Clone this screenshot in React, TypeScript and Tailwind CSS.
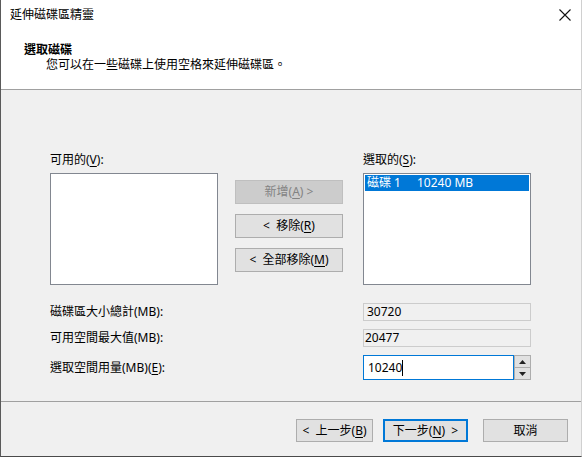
import React from "react";

const font = "font-['Noto_Sans','Noto_Sans_CJK_TC',sans-serif]";

function Btn({ children, disabled, primary, className = "" }: { children: React.ReactNode; disabled?: boolean; primary?: boolean; className?: string }) {
  const base = "flex items-center justify-center text-[12px] leading-none whitespace-pre";
  const look = disabled
    ? "bg-[#cccccc] border border-[#bfbfbf] text-[#838383]"
    : primary
    ? "bg-[#e1e1e1] border-2 border-[#0078d7] text-black"
    : "bg-[#e1e1e1] border border-[#adadad] text-black";
  return <div className={`${base} ${look} ${className}`}>{children}</div>;
}

const U = ({ children }: { children: React.ReactNode }) => <span className="underline underline-offset-2">{children}</span>;

export default function App() {
  return (
    <div className={`w-[582px] h-[457px] flex flex-col bg-[#f0f0f0] border-l border-l-[#5a5a5a] border-r border-r-[#d0d0d0] border-b border-b-[#4a4a4a] text-black ${font}`}>
      {/* header */}
      <div className="h-[90px] bg-white border-b border-[#a0a0a0] flex flex-col shrink-0">
        <div className="h-[30px] flex items-center justify-between pl-[9px] pr-[7px]">
          <span className="text-[12px]">延伸磁碟區精靈</span>
          <svg width="14" height="14" viewBox="0 0 14 14" className="mr-[2px]">
            <path d="M1.5 1.5 L12.5 12.5 M12.5 1.5 L1.5 12.5" stroke="#111" strokeWidth="1.1" fill="none" />
          </svg>
        </div>
        <div className="pl-[23px] pt-[13px] text-[12px] font-bold leading-[14px]">選取磁碟</div>
        <div className="pl-[45px] text-[12px] leading-[15px]">您可以在一些磁碟上使用空格來延伸磁碟區。</div>
      </div>

      {/* body */}
      <div className="flex-1 flex flex-col pl-[49px] pt-[62px]">
        <div className="flex">
          <div className="w-[168px] flex flex-col">
            <div className="text-[12px] leading-[16px] h-[21px]">可用的(<U>V</U>):</div>
            <div className="h-[112px] bg-white border border-[#828790]" />
          </div>
          <div className="w-[108px] ml-[17px] pt-[28px] flex flex-col gap-[10px]">
            <Btn disabled className="h-[24px]">新增(<U>A</U>) &gt;</Btn>
            <Btn className="h-[24px]">&lt;  移除(<U>R</U>)</Btn>
            <Btn className="h-[24px]">&lt;  全部移除(<U>M</U>)</Btn>
          </div>
          <div className="w-[168px] ml-[20px] flex flex-col">
            <div className="text-[12px] leading-[16px] h-[21px]">選取的(<U>S</U>):</div>
            <div className="h-[112px] bg-white border border-[#828790] p-[1px]">
              <div className="h-[16px] bg-[#0078d7] text-white text-[12px] leading-[16px] flex pl-[2px]">
                <span className="w-[50px]">磁碟 1</span>
                <span>10240 MB</span>
              </div>
            </div>
          </div>
        </div>

        <div className="flex flex-col mt-[18px] gap-[8px]">
          <div className="flex items-center">
            <span className="w-[313px] text-[12px]">磁碟區大小總計(MB):</span>
            <div className="w-[168px] h-[18px] border border-[#cccccc] text-[12px] leading-[16px] pl-[3px]">30720</div>
          </div>
          <div className="flex items-center">
            <span className="w-[313px] text-[12px]">可用空間最大值(MB):</span>
            <div className="w-[168px] h-[18px] border border-[#cccccc] text-[12px] leading-[16px] pl-[1px]">20477</div>
          </div>
          <div className="flex items-center">
            <span className="w-[313px] text-[12px]">選取空間用量(MB)(<U>E</U>):</span>
            <div className="flex h-[25px]">
              <div className="w-[151px] bg-white border border-[#0078d7] text-[12px] flex items-center pl-[4px]">
                10240<span className="inline-block w-[1px] h-[16px] bg-black" />
              </div>
              <div className="w-[17px] flex flex-col border border-[#adadad] bg-[#e1e1e1]">
                <div className="flex-1 flex items-center justify-center border-b border-[#adadad]">
                  <svg width="7" height="4" viewBox="0 0 7 4"><path d="M0 4 L3.5 0 L7 4 Z" fill="#222" /></svg>
                </div>
                <div className="flex-1 flex items-center justify-center">
                  <svg width="7" height="4" viewBox="0 0 7 4"><path d="M0 0 L3.5 4 L7 0 Z" fill="#222" /></svg>
                </div>
              </div>
            </div>
          </div>
        </div>
      </div>

      {/* footer */}
      <div className="h-[55px] shrink-0 border-t border-[#a0a0a0] flex items-start justify-end pt-[17px] pr-[13px]">
        <Btn className="w-[77px] h-[23px]">&lt;  上一步(<U>B</U>)</Btn>
        <Btn primary className="w-[85px] h-[23px] ml-[10px]">下一步(<U>N</U>)  &gt;</Btn>
        <Btn className="w-[85px] h-[23px] ml-[15px]">取消</Btn>
      </div>
    </div>
  );
}
